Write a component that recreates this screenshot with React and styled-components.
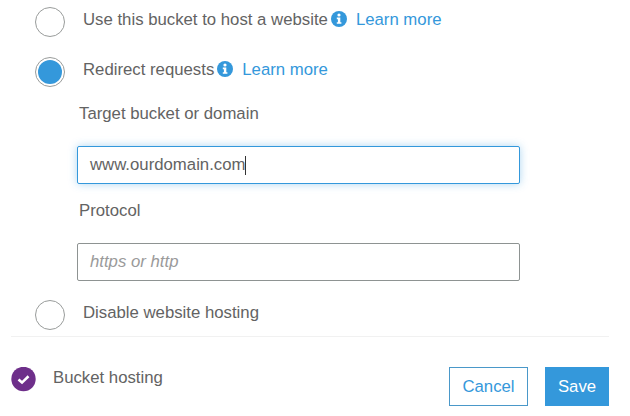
import React from "react";
import styled, { createGlobalStyle } from "styled-components";

const Global = createGlobalStyle`
  html, body { margin: 0; padding: 0; background: #fff; }
  body { font-family: "Liberation Sans", Arial, sans-serif; font-size: 16.75px; color: #545b64; }
  * { box-sizing: border-box; }
`;

const Page = styled.div`
  width: 630px;
  height: 416px;
  padding: 7px 21px 0 11px;
  overflow: hidden;
`;
const Options = styled.div`
  padding-left: 24px;
`;
const OptionRow = styled.div`
  display: flex;
  align-items: flex-start;
  gap: 18px;
  height: 30px;
  margin-top: ${(p) => p.$top || 0}px;
`;
const Radio = styled.span`
  flex: none;
  width: 30px;
  height: 30px;
  border-radius: 50%;
  border: 1px solid #999c9b;
  background: #fff;
  padding: 2px;
  display: block;
`;
const RadioDot = styled.span`
  display: block;
  width: 100%;
  height: 100%;
  border-radius: 50%;
  background: #3498db;
`;
const OptionText = styled.span`
  display: flex;
  align-items: center;
  line-height: 26px;
  white-space: nowrap;
  color: #636363;
`;
const InfoIcon = styled.svg`
  width: 16px;
  height: 16px;
  margin-left: 3px;
  margin-top: -3px;
  flex: none;
`;
const LearnMore = styled.a`
  color: #3498db;
  margin-left: 9px;
  text-decoration: none;
`;
const FormBlock = styled.div`
  padding-left: 42px;
`;
const FieldLabel = styled.div`
  padding-left: 2px;
  height: 20px;
  line-height: 21px;
  margin-top: 16px;
  color: #636363;
`;
const TextBox = styled.div`
  width: 443px;
  height: 38px;
  margin-top: 23px;
  padding: 0 12px;
  display: flex;
  align-items: center;
  border-radius: 2px;
  background: #fff;
  border: 1px solid ${(p) => (p.$focus ? "#3498db" : "#8e9392")};
  box-shadow: ${(p) => (p.$focus ? "0 0 8px rgba(52, 152, 219, 0.4)" : "none")};
  color: ${(p) => (p.$placeholder ? "#9a9a9a" : "#636363")};
  font-style: ${(p) => (p.$placeholder ? "italic" : "normal")};
`;
const Caret = styled.span`
  display: inline-block;
  width: 1px;
  height: 19px;
  background: #333;
`;
const Divider = styled.div`
  height: 1px;
  margin-top: 6px;
  background: #f1f1f1;
`;
const Footer = styled.div`
  display: flex;
  justify-content: space-between;
  align-items: flex-start;
  padding-top: 30px;
`;
const Status = styled.div`
  display: flex;
  align-items: flex-start;
  gap: 17px;
`;
const CheckBadge = styled.svg`
  width: 25px;
  height: 25px;
  flex: none;
`;
const StatusText = styled.span`
  line-height: 21px;
  color: #636363;
`;
const Actions = styled.div`
  display: flex;
  gap: 17px;
`;
const Button = styled.button`
  height: 39px;
  width: ${(p) => p.$w}px;
  padding: 0;
  font: 16.75px "Liberation Sans", Arial, sans-serif;
  border: 1px solid ${(p) => (p.$primary ? "#3498db" : "#4a98c9")};
  background: ${(p) => (p.$primary ? "#3498db" : "#fff")};
  color: ${(p) => (p.$primary ? "#fff" : "#3498db")};
`;

const Info = () => (
  <InfoIcon viewBox="0 0 16 16">
    <circle cx="8" cy="8" r="8" fill="#3498db" />
    <circle cx="8" cy="4" r="1.6" fill="#fff" />
    <path d="M5.8 6.6H9.3V11.2H10.4V12.8H5.8V11.2H6.9V8.2H5.8Z" fill="#fff" />
  </InfoIcon>
);

export default function App() {
  return (
    <>
      <Global />
      <Page>
        <Options>
          <OptionRow>
            <Radio />
            <OptionText>
              Use this bucket to host a website
              <Info />
              <LearnMore>Learn more</LearnMore>
            </OptionText>
          </OptionRow>
          <OptionRow $top={20}>
            <Radio>
              <RadioDot />
            </Radio>
            <OptionText>
              Redirect requests
              <Info />
              <LearnMore>Learn more</LearnMore>
            </OptionText>
          </OptionRow>
          <FormBlock>
            <FieldLabel>Target bucket or domain</FieldLabel>
            <TextBox $focus>
              www.ourdomain.com
              <Caret />
            </TextBox>
            <FieldLabel>Protocol</FieldLabel>
            <TextBox $placeholder>https or http</TextBox>
          </FormBlock>
          <OptionRow $top={19}>
            <Radio />
            <OptionText>Disable website hosting</OptionText>
          </OptionRow>
        </Options>
        <Divider />
        <Footer>
          <Status>
            <CheckBadge viewBox="0 0 25 25">
              <circle cx="12.5" cy="12" r="12.2" fill="#6e2f8a" />
              <path d="M7.5 12.6L11 15.6L17.5 9.3" fill="none" stroke="#fff" strokeWidth="2.6" />
            </CheckBadge>
            <StatusText>Bucket hosting</StatusText>
          </Status>
          <Actions>
            <Button $w={79}>Cancel</Button>
            <Button $w={64} $primary>Save</Button>
          </Actions>
        </Footer>
      </Page>
    </>
  );
}
